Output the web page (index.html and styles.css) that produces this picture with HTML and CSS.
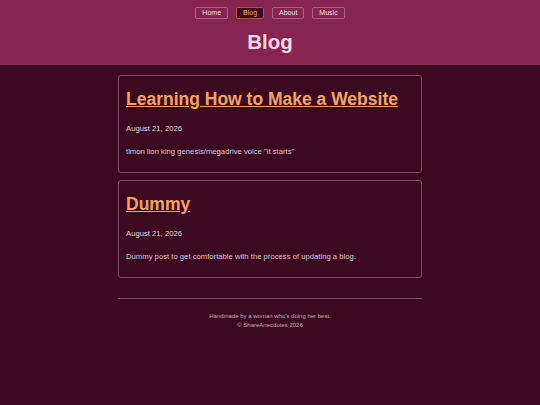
FILE: index.html
```html
<!DOCTYPE html>
<html lang="en">
<head>
<meta charset="utf-8">
<title>Blog</title>
<link rel="stylesheet" href="styles.css">
</head>
<body>
<header class="site-header">
  <nav class="nav">
    <a class="nav-link" href="#">Home</a>
    <a class="nav-link active" href="#">Blog</a>
    <a class="nav-link" href="#">About</a>
    <a class="nav-link" href="#">Music</a>
  </nav>
  <h1 class="page-title">Blog</h1>
</header>
<main class="content">
  <article class="post">
    <h2 class="post-title"><a href="#">Learning How to Make a Website</a></h2>
    <p class="post-date">August 21, 2026</p>
    <p class="post-body">timon lion king genesis/megadrive voice "it starts"</p>
  </article>
  <article class="post">
    <h2 class="post-title"><a href="#">Dummy</a></h2>
    <p class="post-date">August 21, 2026</p>
    <p class="post-body">Dummy post to get comfortable with the process of updating a blog.</p>
  </article>
  <footer class="site-footer">
    <p>Handmade by a woman who's doing her best.</p>
    <p>© ShareAnecdotes 2026</p>
  </footer>
</main>
</body>
</html>
```
FILE: styles.css
```css
html, body {
  margin: 0;
  padding: 0;
  background: #3b0a20;
  font-family: "Liberation Sans", Arial, sans-serif;
  color: #e2d4dc;
}

.site-header {
  background: #862650;
  padding: 7px 0 11px;
  display: flex;
  flex-direction: column;
  align-items: center;
}

.nav {
  display: flex;
  gap: 8px;
}

.nav-link {
  font-size: 7px;
  line-height: 10px;
  padding: 0 6px;
  border: 1px solid rgba(255, 255, 255, 0.28);
  border-radius: 2px;
  color: #efdfe8;
  text-decoration: none;
}

.nav-link.active {
  background: #3b0a20;
  border-color: #b0503c;
  color: #f4a460;
}

.page-title {
  margin: 11px 0 0;
  font-size: 20.5px;
  line-height: 24px;
  font-weight: bold;
  color: #f0d6e4;
}

.content {
  width: 304px;
  margin: 10px auto 0;
  display: flex;
  flex-direction: column;
  gap: 7px;
}

.post {
  border: 1px solid #7a4a68;
  border-radius: 3px;
  padding: 13px 7px 16px;
}

.post-title {
  margin: 0 0 15px;
  font-size: 17.5px;
  line-height: 20px;
  font-weight: bold;
}

.post-title a {
  color: #f4a460;
  text-decoration: underline;
}

.post-date,
.post-body {
  margin: 0;
  font-size: 7.7px;
  line-height: 9px;
}

.post-date {
  margin-bottom: 14px;
  color: #e2d4dc;
}

.post-body {
  color: #d8c6d0;
}

.site-footer {
  margin-top: 13px;
  border-top: 1px solid #7a4a68;
  padding-top: 13px;
  text-align: center;
}

.site-footer p {
  margin: 0;
  font-size: 6px;
  line-height: 9px;
  color: #c4acb8;
}
```
